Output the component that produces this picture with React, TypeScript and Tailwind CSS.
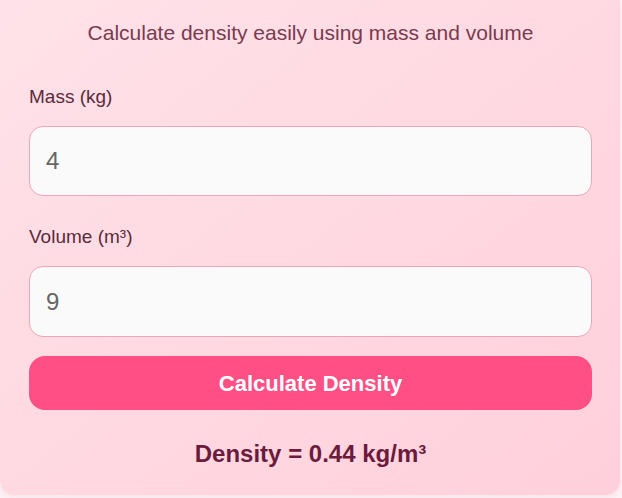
import React, { useState } from 'react';

export default function App() {
  const [mass, setMass] = useState('4');
  const [volume, setVolume] = useState('9');
  const [result, setResult] = useState('0.44');

  const calculate = () => {
    const m = parseFloat(mass);
    const v = parseFloat(volume);
    if (!isNaN(m) && !isNaN(v) && v !== 0) setResult((m / v).toFixed(2));
  };

  return (
    <div className="min-h-screen w-full bg-[#fdf3f6] font-['Liberation_Sans',Arial,sans-serif]">
      <div className="w-[620px] h-[495px] rounded-b-[14px] bg-gradient-to-br from-[#ffe2e9] to-[#ffd0db] shadow-[0_2px_6px_rgba(220,120,150,0.15)] pl-[29px] pr-[28px] pt-[17px]">
        <p className="text-center text-[21px] leading-[31px] text-[#7a3a4f]">
          Calculate density easily using mass and volume
        </p>

        <label className="block mt-[35px] text-[19px] leading-[28px] text-[#5c2a3a]">Mass (kg)</label>
        <input
          type="number"
          value={mass}
          onChange={e => setMass(e.target.value)}
          className="mt-[15px] block w-full h-[70px] rounded-[14px] border border-[#eea5ba] bg-[#fafafa] px-4 text-[24px] text-[#666666] outline-none"
        />

        <label className="block mt-[27px] text-[19px] leading-[28px] text-[#5c2a3a]">Volume (m³)</label>
        <input
          type="number"
          value={volume}
          onChange={e => setVolume(e.target.value)}
          className="mt-[15px] block w-full h-[71px] rounded-[14px] border border-[#eea5ba] bg-[#fafafa] px-4 text-[24px] text-[#666666] outline-none"
        />

        <button
          onClick={calculate}
          className="mt-[19px] block w-full h-[54px] rounded-[16px] bg-[#ff4f84] text-white text-[22px] font-bold"
        >
          Calculate Density
        </button>

        <p className="mt-[28px] text-center text-[24px] leading-[32px] font-bold text-[#6b1b3c]">
          Density = {result} kg/m³
        </p>
      </div>
    </div>
  );
}
